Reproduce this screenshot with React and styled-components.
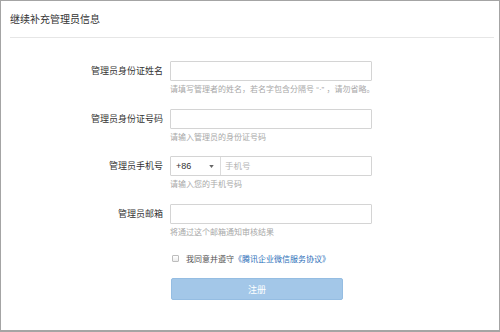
import React from "react";
import styled, { createGlobalStyle } from "styled-components";

const GlobalStyle = createGlobalStyle`
  html, body {
    margin: 0;
    padding: 0;
    background: #fff;
  }
  body {
    font-family: "Liberation Sans", "Noto Sans CJK SC", sans-serif;
    color: #333;
  }
  * {
    box-sizing: border-box;
  }
`;

const fields = [
  {
    id: "name",
    label: "管理员身份证姓名",
    hint: "请填写管理者的姓名，若名字包含分隔号 “·” ，请勿省略。",
  },
  { id: "idcard", label: "管理员身份证号码", hint: "请输入管理员的身份证号码" },
  { id: "phone", label: "管理员手机号", hint: "请输入您的手机号码", phone: true },
  { id: "email", label: "管理员邮箱", hint: "将通过这个邮箱通知审核结果" },
];

function PhoneInput() {
  return (
    <PhoneBox>
      <CountryCode>
        +86
        <Caret viewBox="0 0 6 4">
          <path d="M0 0h6L3 4z" fill="#666" />
        </Caret>
      </CountryCode>
      <PhoneField placeholder="手机号" />
    </PhoneBox>
  );
}

export default function App() {
  return (
    <>
      <GlobalStyle />
      <Frame>
        <Header>
          <Title>继续补充管理员信息</Title>
        </Header>

        <Form>
          {fields.map((field) => (
            <Row key={field.id}>
              <Label>{field.label}</Label>
              <Control>
                {field.phone ? <PhoneInput /> : <TextInput />}
                <Hint>{field.hint}</Hint>
              </Control>
            </Row>
          ))}

          <Agreement>
            <Checkbox type="checkbox" />
            <AgreeText>
              我同意并遵守<Link>《腾讯企业微信服务协议》</Link>
            </AgreeText>
          </Agreement>

          <SubmitButton type="button">注册</SubmitButton>
        </Form>
      </Frame>
    </>
  );
}

const Frame = styled.div`
  width: 500px;
  height: 332px;
  border: 1px solid #a4a4a4;
  border-bottom-width: 2px;
  background: #fff;
  overflow: hidden;
`;

const Header = styled.header`
  margin: 0 5px 0 9px;
  height: 37px;
  border-bottom: 1px solid #e6e6e6;
  display: flex;
  align-items: center;
  padding-bottom: 1px;
`;

const Title = styled.h1`
  margin: 0;
  font-size: 10px;
  font-weight: normal;
  color: #333;
`;

const Form = styled.div`
  padding-top: 23px;
  display: flex;
  flex-direction: column;
`;

const Row = styled.div`
  display: flex;
  align-items: flex-start;
  margin-bottom: 13.5px;
`;

const Label = styled.label`
  width: 169px;
  padding-right: 7px;
  height: 20px;
  line-height: 20px;
  text-align: right;
  font-size: 9px;
  color: #333;
  white-space: nowrap;
`;

const Control = styled.div`
  width: 202px;
  display: flex;
  flex-direction: column;
`;

const TextInput = styled.input`
  width: 100%;
  height: 20px;
  margin: 0;
  padding: 0 5px;
  border: 1px solid #d4d4d4;
  border-radius: 1px;
  background: #fff;
  outline: none;
  font-size: 9px;
`;

const PhoneBox = styled.div`
  display: flex;
  height: 20px;
  border: 1px solid #d4d4d4;
  border-radius: 1px;
  background: #fff;
`;

const CountryCode = styled.div`
  width: 50px;
  display: flex;
  align-items: center;
  justify-content: space-between;
  padding: 0 6px 0 5px;
  border-right: 1px solid #dcdcdc;
  font-size: 9px;
  color: #333;
`;

const Caret = styled.svg`
  width: 5px;
  height: 3px;
`;

const PhoneField = styled.input`
  flex: 1;
  min-width: 0;
  border: none;
  outline: none;
  padding: 0 4px;
  font-size: 8.5px;
  font-family: inherit;
  background: transparent;

  &::placeholder {
    color: #b5b5b5;
  }
`;

const Hint = styled.p`
  margin: 3px 0 0;
  line-height: 11px;
  font-size: 8px;
  color: #a8a8a8;
  white-space: nowrap;
`;

const Agreement = styled.div`
  display: flex;
  align-items: center;
  margin: 1px 0 0 170px;
  height: 12px;
`;

const Checkbox = styled.input`
  appearance: none;
  width: 7px;
  height: 7px;
  margin: 0 7px 0 1px;
  border: 1px solid #bdbdbd;
  border-radius: 1px;
  background: linear-gradient(#fff, #ececec);
`;

const AgreeText = styled.span`
  font-size: 8px;
  color: #555;
  white-space: nowrap;
`;

const Link = styled.a`
  color: #2d6fb9;
  cursor: pointer;
`;

const SubmitButton = styled.button`
  margin: 14px 0 0 170px;
  width: 172px;
  height: 22px;
  border: 1px solid #95bde2;
  border-radius: 2px;
  background: #a3c7e8;
  color: #fff;
  font-size: 9px;
  font-family: inherit;
  cursor: pointer;
`;
